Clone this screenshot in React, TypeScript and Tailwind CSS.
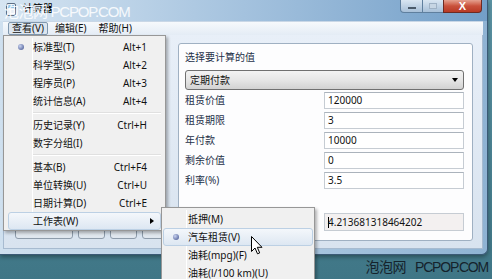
import React from 'react';

type Item = { label: string; shortcut?: string; checked?: boolean; active?: boolean; arrow?: boolean } | 'sep';

const viewMenu: Item[] = [
  { label: '标准型(T)', shortcut: 'Alt+1', checked: true },
  { label: '科学型(S)', shortcut: 'Alt+2' },
  { label: '程序员(P)', shortcut: 'Alt+3' },
  { label: '统计信息(A)', shortcut: 'Alt+4' },
  'sep',
  { label: '历史记录(Y)', shortcut: 'Ctrl+H' },
  { label: '数字分组(I)' },
  'sep',
  { label: '基本(B)', shortcut: 'Ctrl+F4' },
  { label: '单位转换(U)', shortcut: 'Ctrl+U' },
  { label: '日期计算(D)', shortcut: 'Ctrl+E' },
  { label: '工作表(W)', arrow: true, active: true },
];

const sheetMenu: Item[] = [
  { label: '抵押(M)' },
  { label: '汽车租赁(V)', checked: true, active: true },
  { label: '油耗(mpg)(F)' },
  { label: '油耗(l/100 km)(U)' },
];

const fields = [
  { label: '租赁价值', value: '120000' },
  { label: '租赁期限', value: '3' },
  { label: '年付款', value: '10000' },
  { label: '剩余价值', value: '0' },
  { label: '利率(%)', value: '3.5' },
];

const Bullet = () => (
  <span className="w-[6px] h-[6px] rounded-full bg-[radial-gradient(circle_at_35%_35%,#c9d3f0,#3d4f8c)]" />
);

const MenuRow: React.FC<{ item: Exclude<Item, 'sep'>; gutter: number }> = ({ item, gutter }) => (
  <div
    className={`relative h-[18px] flex items-center pr-[13px] rounded-[3px] border ${
      item.active
        ? 'border-[#bcd0e4] bg-gradient-to-b from-[#f4f7fb] to-[#dde7f2]'
        : 'border-transparent'
    }`}
  >
    <span className="flex justify-center items-center" style={{ width: gutter }}>
      {item.checked && <Bullet />}
    </span>
    <span className="flex-1 whitespace-nowrap">{item.label}</span>
    {item.shortcut && <span className="whitespace-nowrap">{item.shortcut}</span>}
    {item.arrow && (
      <span className="w-0 h-0 border-y-[3px] border-y-transparent border-l-[4px] border-l-black mr-[-7px]" />
    )}
  </div>
);

export default function App() {
  return (
    <div className="relative w-[492px] h-[279px] overflow-hidden flex flex-col bg-gradient-to-b from-[#5b93a3] to-[#3f7686] font-['Noto_Sans','Noto_Sans_CJK_SC',sans-serif] text-[10px] text-[#111]">
      {/* window */}
      <div className="w-[488px] h-[255px] shrink-0 flex flex-col rounded-br-[6px] border-r border-b border-[#3b5a76] bg-gradient-to-r from-[#cfe0ef] via-[#b0cbe3] to-[#8fb3d3] shadow-[0_2px_4px_rgba(0,0,0,0.35)]">
        {/* title bar */}
        <div className="h-[21px] flex items-start bg-gradient-to-r from-[#d6e5f2] via-[#a4c2de] to-[#739fc8]">
          <div className="mt-[3px] ml-[6px] w-[10px] h-[13px] rounded-[2px] bg-[#e8eef5] border border-[#5c6f85] flex flex-col items-center">
            <span className="mt-[1px] w-[6px] h-[3px] bg-[#8fc4e8]" />
          </div>
          <span className="ml-[7px] mt-[1px] text-[10px] text-black">计算器</span>
          <div className="ml-auto mr-[5px] flex h-[13px]">
            <div className="w-[23px] h-full rounded-bl-[4px] border border-t-0 border-[#5f7f9e] bg-gradient-to-b from-[#d9e6f2] to-[#a8c0d8] flex items-end justify-center pb-[3px]">
              <span className="w-[8px] h-[2px] bg-white border border-[#4a5a6a]" />
            </div>
            <div className="w-[20px] h-full border-b border-[#5f7f9e] bg-gradient-to-b from-[#d9e6f2] to-[#a8c0d8] flex items-center justify-center">
              <span className="w-[8px] h-[6px] border border-[#9fb2c5] bg-[#c7d6e4]" />
            </div>
            <div className="w-[39px] h-full rounded-br-[4px] border border-t-0 border-[#6e2a22] bg-gradient-to-b from-[#e4a08f] via-[#c9503b] to-[#b83a25] flex items-center justify-center text-white font-bold text-[11px] leading-none font-['Liberation_Sans',sans-serif]">
              X
            </div>
          </div>
        </div>

        <div className="flex-1 flex flex-col pl-[3px] pr-[4px] pb-[5px]">
          {/* menu bar */}
          <div className="h-[14px] flex items-center bg-gradient-to-b from-[#f6f9fc] to-[#e4ecf5] border-t border-[#c9d7e6]">
            <span className="ml-[5px] h-[13px] px-[3px] flex items-center rounded-[2px] border border-[#7f97ae] bg-[#dde6ef]">查看(V)</span>
            <span className="ml-[7px]">编辑(E)</span>
            <span className="ml-[12px]">帮助(H)</span>
          </div>

          {/* client */}
          <div className="flex-1 flex bg-gradient-to-b from-[#e8eff8] to-[#d8e3ef] border border-t-0 border-[#a7bbd0]">
            <div className="w-[166px] flex flex-col justify-end pb-[9px] pl-[11px]">
              <div className="flex gap-[5px]">
                <div className="w-[58px] h-[27px] rounded-[3px] border border-[#8e9cab] bg-gradient-to-b from-[#f4f7fa] to-[#dfe6ee]" />
                <div className="w-[27px] h-[27px] rounded-[3px] border border-[#8e9cab] bg-gradient-to-b from-[#f4f7fa] to-[#dfe6ee]" />
                <div className="w-[27px] h-[27px] rounded-[3px] border border-[#8e9cab] bg-gradient-to-b from-[#f4f7fa] to-[#dfe6ee]" />
                <div className="w-[27px] h-[27px] rounded-[3px] border border-[#8e9cab] bg-gradient-to-b from-[#f4f7fa] to-[#dfe6ee]" />
              </div>
            </div>

            <div className="ml-[8px] mt-[8px] mb-[7px] w-[295px] rounded-[3px] border border-[#9fb0c2] bg-[#fdfdfe] pl-[6px] pr-[8px] pt-[6px] flex flex-col text-[#1e3048]">
              <div className="h-[14px] flex items-center">选择要计算的值</div>
              <div className="mt-[6px] h-[20px] flex items-center rounded-[3px] border border-[#707070] bg-gradient-to-b from-[#f3f3f3] via-[#e6e6e6] to-[#d2d2d2] pl-[4px] pr-[5px] text-[#111]">
                <span className="flex-1">定期付款</span>
                <span className="w-0 h-0 border-x-[3px] border-x-transparent border-t-[4px] border-t-black" />
              </div>
              <div className="mt-[2px] flex flex-col gap-[3px]">
                {fields.map(f => (
                  <div key={f.label} className="h-[17px] flex items-center">
                    <span className="flex-1">{f.label}</span>
                    <div className="w-[140px] h-full flex items-center pl-[3px] border border-[#c6ccd3] border-t-[#abb3bc] bg-white text-[#111]">{f.value}</div>
                  </div>
                ))}
              </div>
              <div className="mt-[24px] flex justify-end">
                <div className="w-[140px] h-[18px] flex items-center pl-[3px] border border-[#c6ccd3] bg-[#f3f0f0] text-[#111]">
                  <span className="w-px h-[11px] bg-black mr-[-1px]" />
                  4.213681318464202
                </div>
              </div>
            </div>
          </div>
        </div>
      </div>

      {/* desktop watermark */}
      <div className="flex-1 flex items-center justify-end pr-[4px] text-[#15232c] text-[14px] font-['Liberation_Sans','Noto_Sans_CJK_SC',sans-serif] tracking-[-0.5px]">
        <span>泡泡网</span>
        <span className="ml-[9px] tracking-[-1.2px]">PCPOP.COM</span>
      </div>

      {/* title watermark */}
      <div className="absolute left-[4px] top-[1px] flex text-white/85 text-[15px] font-['Liberation_Sans','Noto_Sans_CJK_SC',sans-serif] tracking-[-0.5px]">
        <span>泡泡网</span>
        <span className="ml-[3px] tracking-[-1.2px]">PCPOP.COM</span>
      </div>

      {/* view menu */}
      <div className="absolute left-[3px] top-[35px] w-[163px] h-[196px] p-[2px] px-[4px] bg-[#f0f0f0] border border-[#979797] shadow-[2px_2px_3px_rgba(0,0,0,0.3)]">
        <div className="absolute left-[28px] top-[2px] bottom-[2px] w-px bg-[#e2e3e3] border-r border-white" />
        {viewMenu.map((it, i) =>
          it === 'sep' ? (
            <div key={i} className="h-[6px] flex items-center pl-[25px]">
              <div className="flex-1 h-[2px] border-t border-[#e0e0e0] border-b border-b-white" />
            </div>
          ) : (
            <MenuRow key={i} item={it} gutter={24} />
          )
        )}
      </div>

      {/* sheet submenu */}
      <div className="absolute left-[161px] top-[207px] w-[154px] h-[80px] pt-[2px] px-[1px] bg-[#f0f0f0] border border-[#979797] shadow-[2px_2px_3px_rgba(0,0,0,0.3)]">
        <div className="absolute left-[24px] top-[2px] bottom-0 w-px bg-[#e2e3e3] border-r border-white" />
        {sheetMenu.map((it, i) => it !== 'sep' && <MenuRow key={i} item={it} gutter={24} />)}
      </div>

      {/* cursor */}
      <svg className="absolute left-[251px] top-[236px]" width="12" height="19" viewBox="0 0 12 19">
        <path d="M0.5 0.5 L0.5 15.5 L4 12 L6.5 17.8 L8.7 16.9 L6.3 11.3 L11 11.3 Z" fill="white" stroke="black" strokeWidth="1" strokeLinejoin="round" />
      </svg>
    </div>
  );
}
